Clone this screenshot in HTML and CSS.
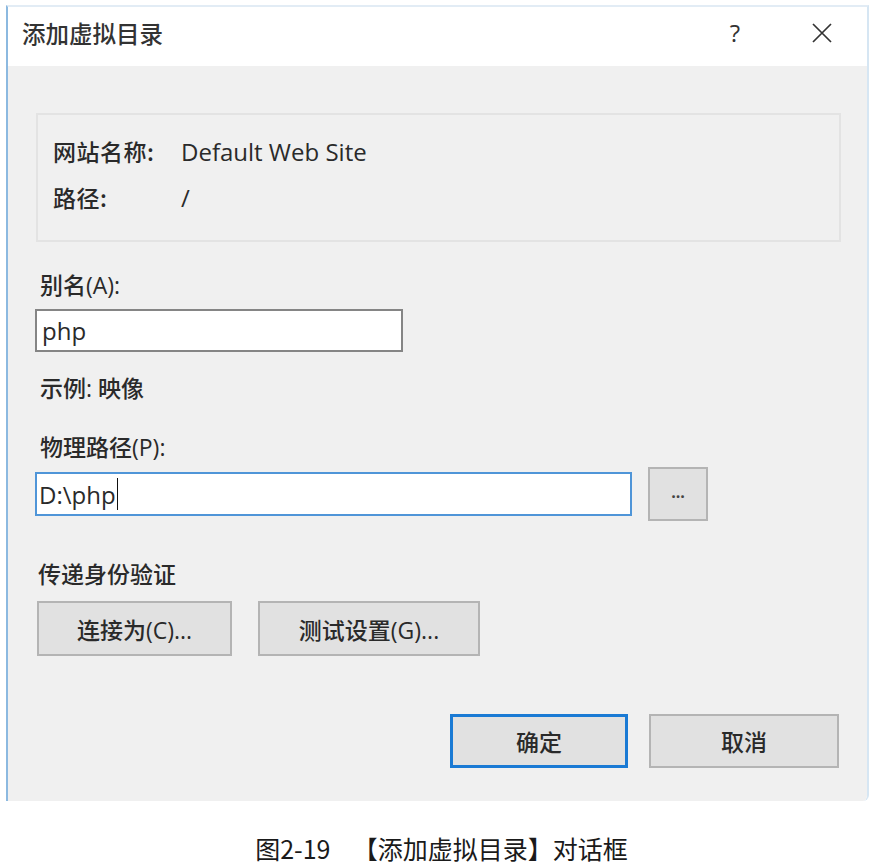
FILE: index.html
```html
<!DOCTYPE html>
<html lang="zh-CN">
<head>
<meta charset="utf-8">
<title>添加虚拟目录</title>
<link rel="stylesheet" href="styles.css">
</head>
<body>
<div class="page">
  <div class="dialog">
    <div class="titlebar">
      <span class="title">添加虚拟目录</span>
      <span class="help">?</span>
      <svg class="close" width="20" height="20" viewBox="0 0 20 20"><path d="M1 1 L19 19 M19 1 L1 19" stroke="#333" stroke-width="1.7" fill="none"/></svg>
    </div>
    <div class="content">
      <div class="info">
        <div class="info-row"><span class="info-key">网站名称:</span><span class="info-val">Default Web Site</span></div>
        <div class="info-row"><span class="info-key">路径:</span><span class="info-val">/</span></div>
      </div>
      <div class="label l-alias">别名(A):</div>
      <div class="input alias">php</div>
      <div class="label l-example">示例: 映像</div>
      <div class="label l-path">物理路径(P):</div>
      <div class="path-row">
        <div class="input path">D:\php<span class="caret"></span></div>
        <div class="btn browse">...</div>
      </div>
      <div class="label l-auth">传递身份验证</div>
      <div class="auth-row">
        <div class="btn connect">连接为(C)...</div>
        <div class="btn test">测试设置(G)...</div>
      </div>
      <div class="footer">
        <div class="btn ok">确定</div>
        <div class="btn cancel">取消</div>
      </div>
    </div>
  </div>
  <div class="caption">图2-19&nbsp;&nbsp;&nbsp;&nbsp;【添加虚拟目录】对话框</div>
</div>
</body>
</html>
```
FILE: styles.css
```css
* { box-sizing: border-box; }
body {
  margin: 0;
  background: #fff;
  font-family: "Open Sans", "Noto Sans CJK SC", sans-serif;
  color: #2a2a2a;
}
.page {
  width: 877px;
  height: 867px;
  padding: 5px 0 0 6px;
}
.dialog {
  width: 863px;
  height: 796px;
  border-top: 2px solid #e2ecf5;
  border-left: 2px solid #8cb9e0;
  border-right: 2px solid #d6e6f3;
  border-bottom-right-radius: 6px;
  display: flex;
  flex-direction: column;
  overflow: hidden;
}
.titlebar {
  height: 59px;
  background: #fff;
  display: flex;
  align-items: center;
  padding-left: 14px;
  padding-bottom: 8px;
}
.title {
  font-family: "Noto Sans CJK SC", sans-serif;
  font-size: 23.5px;
  font-weight: 500;
  color: #333;
  flex: 1;
}
.help {
  font-family: "Open Sans", sans-serif;
  font-size: 24px;
  color: #333;
  margin-right: 72px;
}
.close { margin-right: 35px; }
.content {
  flex: 1;
  background: #f0f0f0;
  padding: 47px 26px 0 27px;
  display: flex;
  flex-direction: column;
  font-size: 23px;
  font-weight: 500;
}
.info {
  margin-left: 1px;
  height: 129px;
  border: 2px solid #e3e3e3;
  padding: 13px 0 0 15px;
}
.info-row {
  display: flex;
  height: 46px;
  align-items: center;
}
.info-key {
  width: 128px;
  font-family: "Noto Sans CJK SC", sans-serif;
  letter-spacing: 0.5px;
}
.info-val { font-size: 24px; }
.label {
  height: 30px;
  line-height: 30px;
  padding-left: 5px;
  font-family: "Open Sans", "Noto Sans CJK SC", sans-serif;
}
.l-alias { margin-top: 28px; }
.input {
  background: #fff;
  border: 2px solid #858585;
  height: 43px;
  padding-left: 5px;
  display: flex;
  align-items: center;
  font-size: 24px;
}
.alias { width: 368px; margin-top: 9px; }
.l-example { margin-top: 21px; }
.l-path { margin-top: 29px; }
.path-row {
  margin-top: 5px;
  display: flex;
  align-items: center;
  gap: 16px;
  height: 54px;
}
.path {
  width: 597px;
  height: 44px;
  border-color: #4f95d8;
  padding-left: 2px;
}
.caret {
  display: inline-block;
  width: 1.5px;
  height: 32px;
  background: #111;
  margin-left: 1px;
}
.btn {
  background: #e1e1e1;
  border: 2px solid #b4b4b4;
  display: flex;
  align-items: center;
  justify-content: center;
  font-size: 23px;
  font-family: "Open Sans", "Noto Sans CJK SC", sans-serif;
}
.browse {
  width: 60px;
  height: 54px;
  font-size: 16px;
  font-weight: bold;
  padding-bottom: 4px;
  color: #444;
}
.l-auth { margin-top: 38px; padding-left: 3px; }
.auth-row {
  margin-top: 12px;
  display: flex;
  gap: 26px;
  padding-left: 2px;
}
.connect { width: 195px; height: 55px; }
.test { width: 222px; height: 55px; }
.footer {
  margin-top: 58px;
  display: flex;
  justify-content: flex-end;
  gap: 21px;
  padding-right: 2px;
}
.ok {
  width: 178px;
  height: 54px;
  border: 3px solid #1a7ad4;
}
.cancel { width: 190px; height: 54px; }
.caption {
  margin-top: 32px;
  width: 871px;
  text-align: center;
  font-size: 25px;
  font-family: "Noto Sans CJK SC", sans-serif;
  color: #1a1a1a;
  line-height: 30px;
}
```
